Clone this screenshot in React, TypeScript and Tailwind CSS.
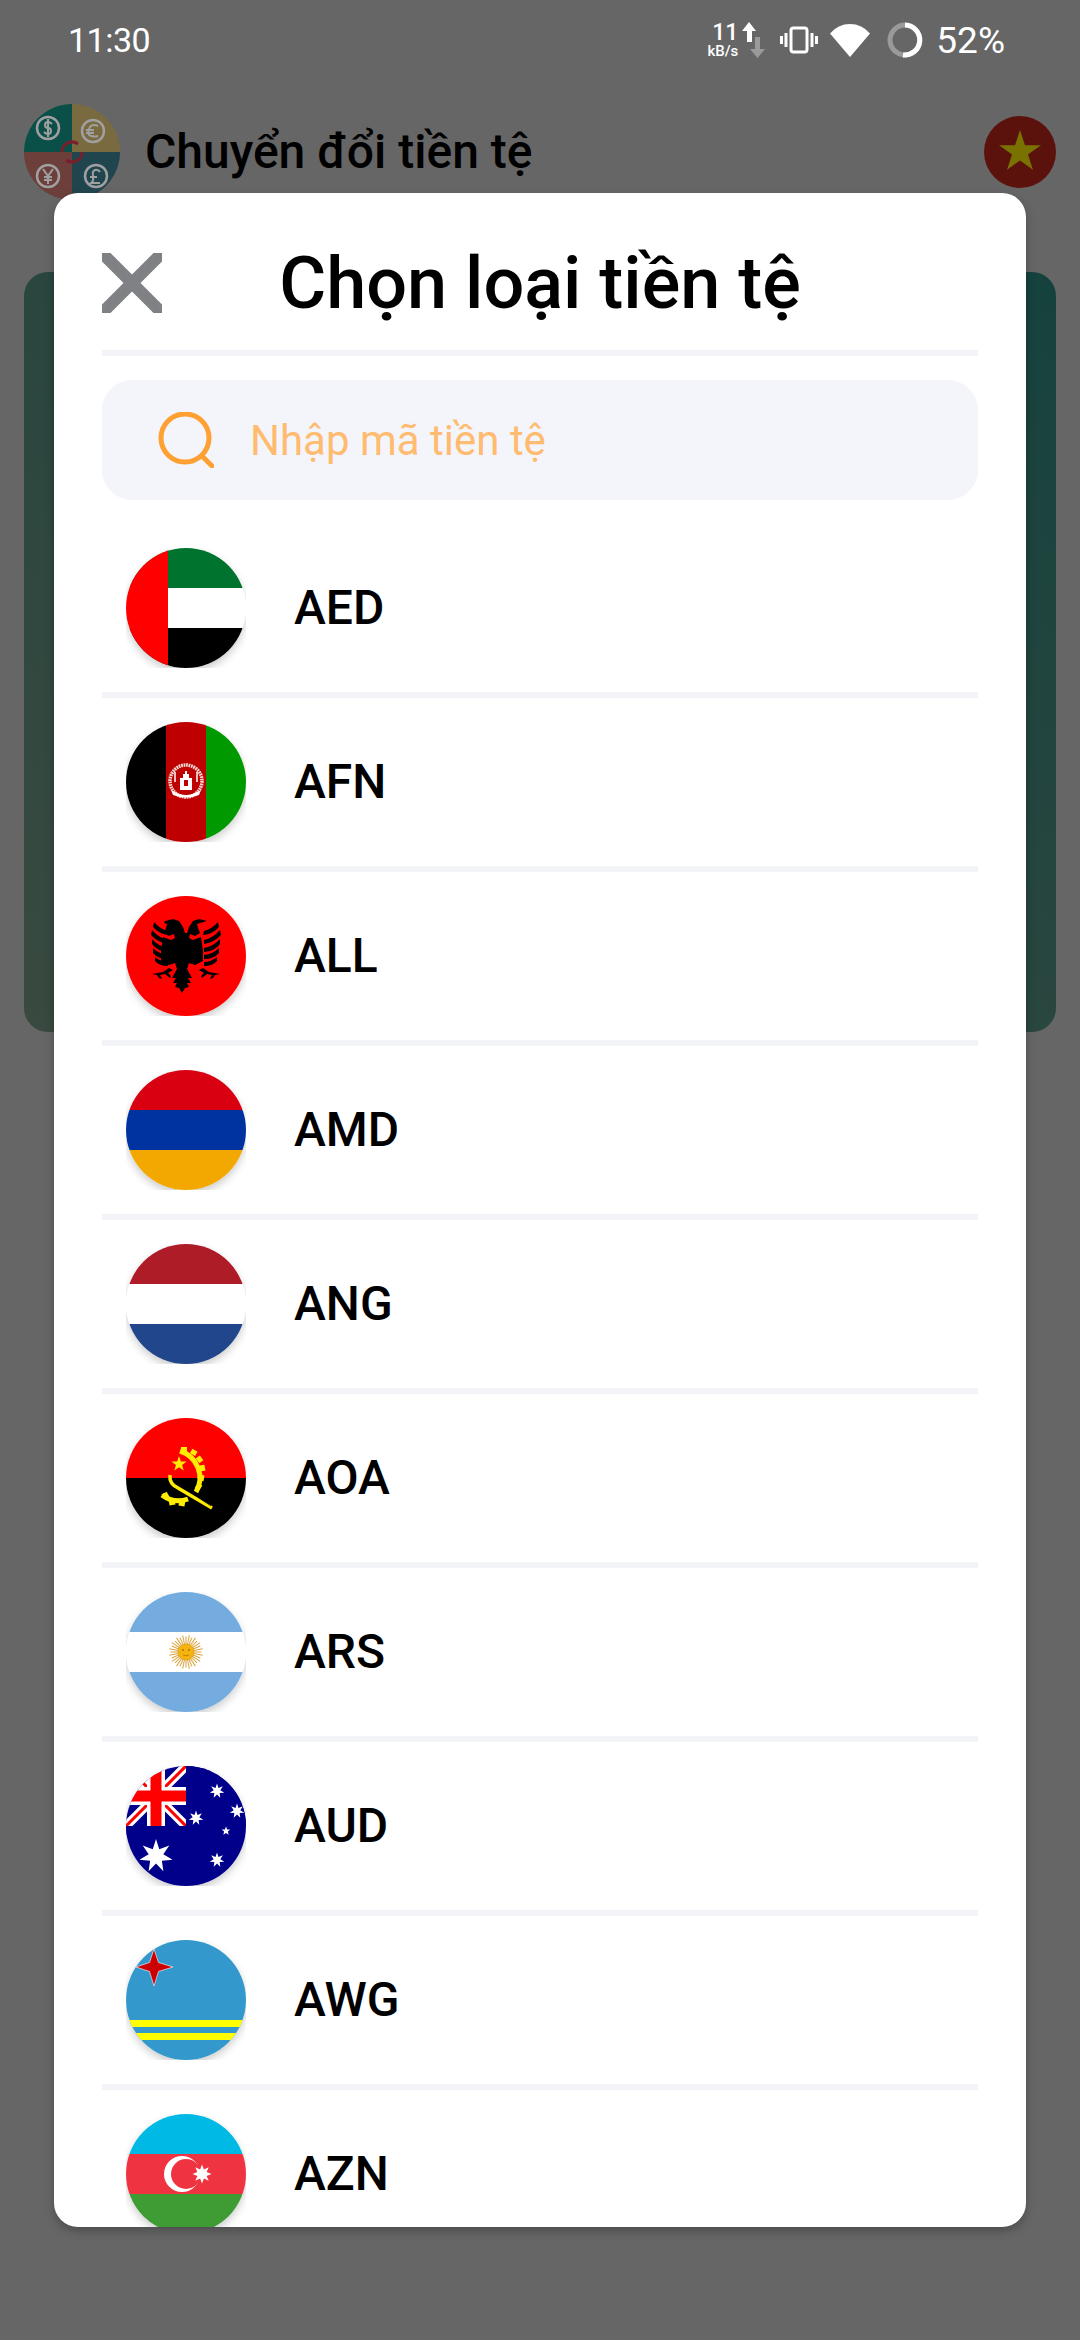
import React from "react";

const font = { fontFamily: "Roboto, sans-serif" };

// star polygon points, used for the flags
function star(cx: number, cy: number, R: number, r: number, n: number, rot = -90) {
  const pts: string[] = [];
  for (let i = 0; i < n * 2; i++) {
    const a = ((rot + (i * 180) / n) * Math.PI) / 180;
    const d = i % 2 === 0 ? R : r;
    pts.push(`${(cx + d * Math.cos(a)).toFixed(2)},${(cy + d * Math.sin(a)).toFixed(2)}`);
  }
  return pts.join(" ");
}

function Aed() {
  return (
    <>
      <rect width="120" height="40" fill="#00732f" />
      <rect y="40" width="120" height="40" fill="#fff" />
      <rect y="80" width="120" height="40" fill="#000" />
      <rect width="42" height="120" fill="#f00" />
    </>
  );
}

function Afn() {
  return (
    <>
      <rect width="40" height="120" fill="#000" />
      <rect x="40" width="40" height="120" fill="#be0000" />
      <rect x="80" width="40" height="120" fill="#009900" />
      <circle cx="60" cy="59" r="16" fill="none" stroke="#f3d6d0" strokeWidth="3.500" strokeDasharray="1.800 0.700" />
      <path d="M54 68V56h3v-4h2v-3h2v3h2v4h3v12z" fill="#fff" />
      <rect x="58" y="58" width="4" height="6" fill="#be0000" />
      <path d="M54 69h12" stroke="#be0000" strokeWidth="1" />
      <path d="M45 68q15 10 30 0l-2 5q-13 5-26 0z" fill="#fff" />
      <path d="M49 50v10M71 50v10" stroke="#fff" strokeWidth="1.500" />
    </>
  );
}

function All() {
  return (
    <>
      <rect width="120" height="120" fill="#f00" />
      <g fill="#000">
        {/* heads + body */}
        <path d="M39 25l8-2 6 2 4 6 2 6h2l2-6 4-6 6-2 8 2-7 2-3 1 1 4 2 5-5 3-5-2-1 4 4 2 8-3 2 14 0 10-8 4-6-2-2 6 5 9-4 0 3 5-4 0 2 4-4 1-3 5-3-5-4-1 2-4-4 0 3-5-4 0 5-9-2-6-6 2-8-4 0-10 2-14 8 3 4-2-1-4-5 2-5-3 2-5 1-4-3-1z" />
        {/* left wing feathers */}
        <path d="M28 26q6 7 14 9l1 4q-10-1-16-8zM26 34q7 8 16 10l0 4q-11-2-17-9zM26 43q6 7 16 9l0 4q-11-1-16-8zM27 52q6 6 15 7l0 4q-10 0-15-6zM29 61q6 5 13 5l0 4q-9 0-13-5z" />
        {/* right wing feathers */}
        <path d="M92 26q-6 7-14 9l-1 4q10-1 16-8zM94 34q-7 8-16 10l0 4q11-2 17-9zM94 43q-6 7-16 9l0 4q11-1 16-8zM93 52q-6 6-15 7l0 4q10 0 15-6zM91 61q-6 5-13 5l0 4q9 0 13-5z" />
        {/* claws */}
        <path d="M26 78l11-2 6-4 4 2-5 3 3 3-1 2-5-4-5 1 2 4-3-1-2-3z" />
        <path d="M94 78l-11-2-6-4-4 2 5 3-3 3 1 2 5-4 5 1-2 4 3-1 2-3z" />
      </g>
    </>
  );
}

function Stripes({ a, b, c }: { a: string; b: string; c: string }) {
  return (
    <>
      <rect width="120" height="40" fill={a} />
      <rect y="40" width="120" height="40" fill={b} />
      <rect y="80" width="120" height="40" fill={c} />
    </>
  );
}

function Aoa() {
  return (
    <>
      <rect width="120" height="60" fill="#f00" />
      <rect y="60" width="120" height="60" fill="#000" />
      <path d="M54 33A28 28 0 0 1 70 74" fill="none" stroke="#ffec00" strokeWidth="5" />
      <path d="M36 77Q48 86 62 81" fill="none" stroke="#ffec00" strokeWidth="5" />
      <path d="M44 57Q43 66 52 70L86 90" fill="none" stroke="#ffec00" strokeWidth="3.500" />
      <path d="M48 63L85 88" stroke="#000" strokeWidth="0.800" />
      <g fill="#ffec00">
        <rect x="55" y="29" width="6" height="5" />
        <rect x="65" y="32" width="6" height="5" transform="rotate(30 68 34)" />
        <rect x="71" y="39" width="6" height="5" transform="rotate(55 74 41)" />
        <rect x="74" y="48" width="6" height="5" transform="rotate(80 77 50)" />
        <rect x="73" y="58" width="6" height="5" transform="rotate(100 76 60)" />
        <rect x="70" y="67" width="6" height="5" transform="rotate(125 73 69)" />
        <rect x="36" y="75" width="6" height="5" transform="rotate(-30 39 77)" />
        <rect x="43" y="82" width="6" height="5" transform="rotate(-10 46 84)" />
        <rect x="53" y="83" width="6" height="5" transform="rotate(10 56 85)" />
        <polygon points={star(53, 46, 8, 3.200, 5)} />
      </g>
    </>
  );
}

function Ars() {
  const rays = Array.from({ length: 32 }, (_, i) => i * 11.25);
  return (
    <>
      <Stripes a="#74acdf" b="#fff" c="#74acdf" />
      {rays.map((r, i) => (
        <line key={r} x1="60" y1="60" x2="60" y2={i % 2 ? 43 : 44.500} stroke="#d9a23c" strokeWidth="1" transform={`rotate(${r} 60 60)`} />
      ))}
      <circle cx="60" cy="60" r="8" fill="#f6b40e" stroke="#d9951a" strokeWidth="0.600" />
      <circle cx="57" cy="58" r="0.900" fill="#a5690f" />
      <circle cx="63" cy="58" r="0.900" fill="#a5690f" />
      <path d="M57 63q3 1.500 6 0" stroke="#a5690f" strokeWidth="0.700" fill="none" />
    </>
  );
}

function Aud() {
  return (
    <>
      <rect width="120" height="120" fill="#00008b" />
      <path d="M0 0L60 60M60 0L0 60" stroke="#fff" strokeWidth="9" />
      <path d="M0 0L60 60M60 0L0 60" stroke="#f00" strokeWidth="3" />
      <path d="M30 0V60M0 30H60" stroke="#fff" strokeWidth="18" />
      <path d="M30 0V60M0 30H60" stroke="#f00" strokeWidth="11" />
      <rect x="60" width="60" height="60" fill="#00008b" />
      <rect y="60" width="60" height="10" fill="#00008b" />
      <g fill="#fff">
        <polygon points={star(30, 90, 17, 7.500, 7)} />
        <polygon points={star(91, 25, 7.500, 3.400, 7)} />
        <polygon points={star(70, 52, 7.500, 3.400, 7)} />
        <polygon points={star(111, 45, 7.500, 3.400, 7)} />
        <polygon points={star(100, 65, 4.500, 2, 5)} />
        <polygon points={star(91, 94, 7.500, 3.400, 7)} />
      </g>
    </>
  );
}

function Awg() {
  return (
    <>
      <rect width="120" height="120" fill="#3399cc" />
      <rect y="80" width="120" height="7" fill="#ffff00" />
      <rect y="93" width="120" height="7" fill="#ffff00" />
      <path d="M28 9L32.500 22.500 47 27 32.500 31.500 28 46 23.500 31.500 10 27 23.500 22.500z" fill="#cc0000" stroke="#fff" strokeWidth="0.600" />
    </>
  );
}

function Azn() {
  return (
    <>
      <Stripes a="#00b9e4" b="#ef3340" c="#3f9c35" />
      <circle cx="56" cy="60" r="18" fill="#fff" />
      <circle cx="60" cy="60" r="15" fill="#ef3340" />
      <polygon points={star(76, 60, 9.500, 5, 8)} fill="#fff" />
    </>
  );
}

const currencies: { code: string; flag: React.ReactNode }[] = [
  { code: "AED", flag: <Aed /> },
  { code: "AFN", flag: <Afn /> },
  { code: "ALL", flag: <All /> },
  { code: "AMD", flag: <Stripes a="#d90012" b="#0033a0" c="#f2a800" /> },
  { code: "ANG", flag: <Stripes a="#ae1c28" b="#fff" c="#21468b" /> },
  { code: "AOA", flag: <Aoa /> },
  { code: "ARS", flag: <Ars /> },
  { code: "AUD", flag: <Aud /> },
  { code: "AWG", flag: <Awg /> },
  { code: "AZN", flag: <Azn /> },
];

function FlagBadge({ children }: { children: React.ReactNode }) {
  return (
    <div className="w-[120px] h-[120px] shrink-0 overflow-hidden">
      <div className="w-[120px] h-[120px] rounded-full overflow-hidden shadow-[0_4px_8px_rgba(0,0,0,0.2)]">
        <svg width="120" height="120" viewBox="0 0 120 120" className="block">
          {children}
        </svg>
      </div>
    </div>
  );
}

function StatusBar() {
  return (
    <div className="h-[80px] pl-[68px] pr-[75px] flex items-center justify-between text-white">
      <span className="text-[34px] leading-none tracking-[-0.5px]">11:30</span>
      <div className="flex items-center">
        <div className="w-[34px] flex flex-col items-end leading-none">
          <span className="text-[23px] font-medium leading-[22px]">11</span>
          <span className="text-[15px] font-medium leading-[14px] whitespace-nowrap">kB/s</span>
        </div>
        <svg width="26" height="36" viewBox="0 0 26 36" className="ml-[4px]">
          <path d="M7 0L14 9H10V20H5V9H0z" fill="#fff" />
          <path d="M13 15H18V27H23L15.500 36 8 27H13z" fill="#9a9a9a" />
        </svg>
        <svg width="38" height="28" viewBox="0 0 38 28" className="ml-[12px]" fill="none" stroke="#fff">
          <rect x="11" y="2" width="16" height="24" rx="2.500" strokeWidth="3" />
          <path d="M6 7V21M1.500 10V18M32 7V21M36.500 10V18" strokeWidth="3" />
        </svg>
        <svg width="40" height="33" viewBox="0 0 40 33" className="ml-[12px]">
          <path d="M20 33L0 9.500Q8 0 20 0T40 9.500z" fill="#fff" />
        </svg>
        <svg width="36" height="36" viewBox="0 0 36 36" className="ml-[17px]" fill="none" strokeWidth="5">
          <circle cx="18" cy="18" r="15" stroke="#9a9a9a" />
          <path d="M18 3A15 15 0 1 1 16 32.900" stroke="#fff" />
        </svg>
        <span className="ml-[13px] text-[37px] leading-none">52%</span>
      </div>
    </div>
  );
}

function AppLogo() {
  return (
    <svg width="96" height="96" viewBox="0 0 96 96" className="shrink-0">
      <path d="M48 48V0A48 48 0 0 0 0 48z" fill="#0a4f48" />
      <path d="M48 48V0A48 48 0 0 1 96 48z" fill="#7a6a40" />
      <path d="M48 48H0A48 48 0 0 0 48 96z" fill="#6c3f3b" />
      <path d="M48 48H96A48 48 0 0 1 48 96z" fill="#21454f" />
      <g fill="none" stroke="#a0a0a0" strokeWidth="2.500">
        <circle cx="24" cy="24" r="11" />
        <circle cx="69" cy="27" r="11" />
        <circle cx="24" cy="72" r="11" />
        <circle cx="72" cy="72" r="11" />
        <path d="M28 20q-2-2-4-2-3 0-3 3t3 3 3 3-3 3q-2 0-4-2M24 15v18" strokeWidth="2" />
        <path d="M74 22q-7-3-9 3t2 7 7 0M62 26h8M62 29h8" strokeWidth="2" />
        <path d="M19 65l5 7 5-7M24 72v8M20 73h8M20 76h8" strokeWidth="2" />
        <path d="M76 68q-2-3-5-2t-2 6-2 7h9M66 73h7" strokeWidth="2" />
      </g>
      <path d="M38 48a10 10 0 0 1 16-8M58 48a10 10 0 0 1-16 8" fill="none" stroke="#7a1f2c" strokeWidth="3" />
    </svg>
  );
}

function Background() {
  return (
    <>
      <StatusBar />
      <div className="pt-[24px] pl-[24px] pr-[24px] h-[192px] flex items-start justify-between">
        <div className="flex items-center gap-[25px]">
          <AppLogo />
          <span className="text-[48px] font-medium text-black">Chuyển đổi tiền tệ</span>
        </div>
        <svg width="72" height="72" viewBox="0 0 72 72" className="mt-[12px]">
          <circle cx="36" cy="36" r="36" fill="#5c120c" />
          <polygon points={star(36, 36, 22, 8.400, 5)} fill="#7a7200" />
        </svg>
      </div>
      <div className="mx-[24px] h-[760px] rounded-[24px] bg-gradient-to-tr from-[#394a40] to-[#15423e]" />
    </>
  );
}

export default function App() {
  return (
    <div className="relative w-[1080px] h-[2340px] overflow-hidden bg-[#666666]" style={font}>
      <Background />
      <div className="absolute left-[54px] top-[193px] w-[972px] h-[2034px] rounded-[24px] bg-white overflow-hidden shadow-[0_4px_10px_rgba(0,0,0,0.25)] px-[48px]">
        <div className="h-[163px] relative flex items-start justify-center border-b-[6px] border-[#f3f4f8]">
          <h1 className="mt-[51px] text-[72px] leading-[80px] font-medium text-black">Chọn loại tiền tệ</h1>
          <svg width="60" height="60" viewBox="0 0 60 60" className="absolute left-0 top-[60px]">
            <path d="M0 0H8.500L30 21.500 51.500 0H60V8.500L38.500 30 60 51.500V60H51.500L30 38.500 8.500 60H0V51.500L21.500 30 0 8.500z" fill="#808185" />
          </svg>
        </div>
        <div className="mt-[24px] h-[120px] rounded-[30px] bg-[#f3f5fa] flex items-center pl-[56px]">
          <svg width="56" height="56" viewBox="0 0 56 56" fill="none" stroke="#ffa033" strokeWidth="5" strokeLinecap="round">
            <circle cx="27" cy="26" r="24" />
            <path d="M44 44L54 54" />
          </svg>
          <span className="ml-[36px] text-[42px] text-[#ffbb70]">Nhập mã tiền tệ</span>
        </div>
        <div className="mt-[24px] flex flex-col">
          {currencies.map((c, i) => (
            <div key={c.code} className={`flex items-center py-[24px] pl-[24px] shrink-0 ${i < currencies.length - 1 ? "border-b-[6px] border-[#f3f4f8]" : ""}`}>
              <FlagBadge>{c.flag}</FlagBadge>
              <span className="ml-[48px] text-[48px] font-medium text-black">{c.code}</span>
            </div>
          ))}
        </div>
      </div>
    </div>
  );
}
